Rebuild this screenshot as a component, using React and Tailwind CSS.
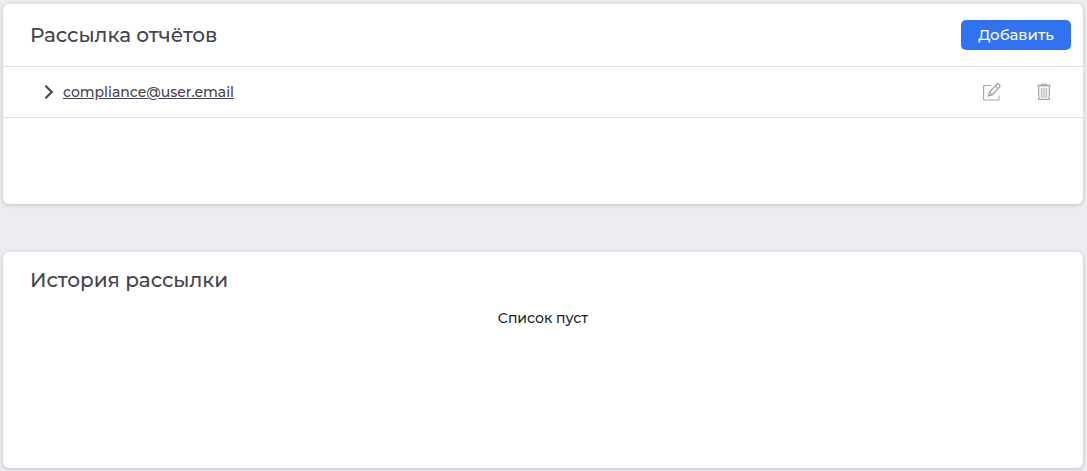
import { useState } from "react";

const initialMailings = [{ id: 1, email: "compliance@user.email" }];

function ChevronIcon({ open }) {
    return (
        <svg viewBox="0 0 10 14" className={`w-[10px] h-[14px] ${open ? "rotate-90" : ""}`} fill="none" stroke="currentColor" strokeWidth="2.2">
            <path d="M1.4 .8 7.8 7l-6.4 6.2" />
        </svg>
    );
}

function EditIcon() {
    return (
        <svg viewBox="0 0 18 18" className="w-[18px] h-[18px]" fill="none" stroke="currentColor" strokeWidth="1.1">
            <path d="M8 2.5H1.5a.9.9 0 0 0-.9.9v12.7c0 .5.4.9.9.9h13.6c.5 0 .9-.4.9-.9V12.5" />
            <path d="M5.4 12.8 6.4 9 13.8 1.3c.6-.6 1.4-.6 2 0l.8.8c.6.6.6 1.4 0 2L9.2 11.8 5.4 12.8Z" strokeWidth="1.3" />
            <path d="m12.3 2.8 2.8 2.8M6.4 9l2.8 2.8" />
        </svg>
    );
}

function TrashIcon() {
    return (
        <svg viewBox="0 0 16 18" className="w-[16px] h-[18px]" fill="none" stroke="currentColor">
            <path d="M1.2 2.6h13.6" strokeWidth="1.6" />
            <path d="M5.5 2V1.2h5V2" strokeWidth="1" />
            <path d="M2.5 3.4 2.9 16.4h10.2l.4-13" strokeWidth="1.2" />
            <path d="M5.3 4.8v10M7.1 4.8v10M8.9 4.8v10M10.7 4.8v10" strokeWidth=".8" />
        </svg>
    );
}

function App() {
    const [mailings, setMailings] = useState(initialMailings);
    const [openId, setOpenId] = useState(null);

    const removeMailing = (id) => {
        setMailings(mailings.filter((item) => item.id !== id));
    };

    return (
        <div className="min-h-screen bg-[#edecf1] pt-1 pl-[3px] pr-1 pb-[3px] flex flex-col gap-12 font-['Montserrat','Inter',sans-serif] font-medium text-[#45434d]">

            {/*Mailings*/}
            <section className="min-h-[200px] bg-white rounded-md shadow-[0_1px_4px_rgba(0,0,0,0.2)]">
                <div className="flex items-center justify-between pl-[27px] pr-3 py-4 border-b border-[#e0e0e2]">
                    <h2 className="text-[20px] leading-[30px]">Рассылка отчётов</h2>
                    <button type="button" className="h-[30px] px-[17px] bg-[#3072f0] hover:bg-[#2463dc] rounded-[5px] text-white text-[15px] leading-[30px] cursor-pointer">
                        Добавить
                    </button>
                </div>

                <ul>
                    {mailings.map((item) => (
                        <li key={item.id} className="flex items-center justify-between h-[51px] pl-[41px] pr-[31px] border-b border-[#e0e0e2]">
                            <div className="flex items-center gap-[9px]">
                                <button
                                    type="button"
                                    aria-label="Развернуть"
                                    aria-expanded={openId === item.id}
                                    onClick={() => setOpenId(openId === item.id ? null : item.id)}
                                    className="cursor-pointer"
                                >
                                    <ChevronIcon open={openId === item.id} />
                                </button>
                                <a href={`mailto:${item.email}`} className="text-[14px] leading-5 underline">{item.email}</a>
                            </div>
                            <div className="flex items-center gap-[35px] text-[#a3a3a5]">
                                <button type="button" aria-label="Редактировать" className="cursor-pointer">
                                    <EditIcon />
                                </button>
                                <button type="button" aria-label="Удалить" onClick={() => removeMailing(item.id)} className="cursor-pointer">
                                    <TrashIcon />
                                </button>
                            </div>
                        </li>
                    ))}
                </ul>
            </section>

            {/*History*/}
            <section className="flex-1 bg-white rounded-md shadow-[0_1px_4px_rgba(0,0,0,0.2)] pt-[13px] pb-4">
                <h2 className="pl-[27px] text-[20px] leading-[30px]">История рассылки</h2>
                <p className="mt-3 text-center text-[14px] leading-[22px] text-[#212529]">Список пуст</p>
            </section>
        </div>
    );
}

export default App;
